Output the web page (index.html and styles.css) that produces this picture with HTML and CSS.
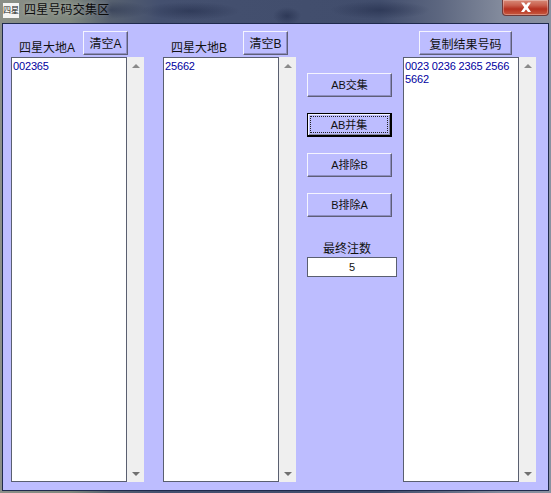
FILE: index.html
```html
<!DOCTYPE html>
<html lang="zh">
<head>
<meta charset="utf-8">
<title>四星号码交集区</title>
<link rel="stylesheet" href="styles.css">
</head>
<body>
<div class="window">
  <div class="titlebar">
    <div class="app-icon">四星</div>
    <div class="title">四星号码交集区</div>
    <div class="close"><svg width="14" height="11" viewBox="0 0 14 11"><path d="M2 0.5h3l2 2.6 2-2.6h3L8.800 5.200 12 10H9L7 7.400 5 10H2l3.200-4.800z" fill="#fff"/></svg></div>
  </div>
  <div class="client">
    <section class="col">
      <div class="col-head">
        <span class="col-label">四星大地A</span>
        <button class="btn btn-clear">清空A</button>
      </div>
      <div class="listbox">
        <div class="list">002365</div>
        <div class="scroll"><i class="arrow-up"></i><i class="arrow-down"></i></div>
      </div>
    </section>
    <section class="col col-b">
      <div class="col-head col-head-b">
        <span class="col-label">四星大地B</span>
        <button class="btn btn-clear">清空B</button>
      </div>
      <div class="listbox">
        <div class="list">25662</div>
        <div class="scroll"><i class="arrow-up"></i><i class="arrow-down"></i></div>
      </div>
    </section>
    <section class="actions">
      <button class="btn btn-action">AB交集</button>
      <button class="btn btn-action is-focused"><span class="focus-ring">AB并集</span></button>
      <button class="btn btn-action">A排除B</button>
      <button class="btn btn-action">B排除A</button>
      <div class="count-label">最终注数</div>
      <div class="count">5</div>
    </section>
    <section class="col col-c">
      <div class="col-head col-head-c">
        <button class="btn btn-copy">复制结果号码</button>
      </div>
      <div class="listbox">
        <div class="list">0023 0236 2365 2566 5662</div>
        <div class="scroll"><i class="arrow-up"></i><i class="arrow-down"></i></div>
      </div>
    </section>
  </div>
</div>
</body>
</html>
```
FILE: styles.css
```css
* { box-sizing: border-box; }
html, body { margin: 0; height: 100%; overflow: hidden; }
body {
  font-family: "Liberation Sans", "Noto Sans CJK SC", sans-serif;
  font-size: 12px;
  color: #111;
}
.window {
  width: 551px;
  height: 493px;
  display: flex;
  flex-direction: column;
  padding: 0 2px 2px;
  background:
    radial-gradient(ellipse 40px 9px at 110px 10px, rgba(30,40,70,.45), transparent),
    radial-gradient(ellipse 50px 9px at 190px 11px, rgba(30,40,70,.5), transparent),
    radial-gradient(ellipse 14px 9px at 287px 16px, rgba(30,40,70,.55), transparent),
    radial-gradient(ellipse 50px 9px at 380px 10px, rgba(30,40,70,.5), transparent),
    linear-gradient(90deg, #8b8f88 0, #7f887e 70px, #56606f 110px, #44506f 160px, #414d6c 380px, #5d6780 440px, #828a9c 500px, #8a91a0 551px);
}
.titlebar {
  height: 23px;
  flex: none;
  display: flex;
  align-items: flex-start;
  margin: 0 -2px;
  position: relative;
}
.app-icon {
  width: 16px;
  height: 15px;
  margin: 3px 0 0 3px;
  background: #f4f4f4;
  font-size: 8px;
  line-height: 15px;
  text-align: center;
  white-space: nowrap;
  color: #222;
}
.title {
  margin: 2px 0 0 5px;
  line-height: 17px;
  font-size: 12px;
  letter-spacing: .2px;
  color: #0c0c0c;
  text-shadow: 0 0 4px rgba(255,255,255,.45);
}
.close {
  position: absolute;
  left: 502px;
  top: 0;
  width: 47px;
  height: 16px;
  border: 1px solid #6e3a3a;
  border-top: 0;
  border-radius: 0 0 4px 4px;
  background: linear-gradient(#d88a78 0, #c9604e 35%, #b5301f 60%, #c85a40 100%);
  box-shadow: inset 0 0 0 1px rgba(255,255,255,.3);
  display: flex;
  align-items: center;
  justify-content: center;
}
.client {
  flex: 1;
  display: flex;
  align-items: stretch;
  padding: 7px 0 8px 8px;
  background: #bdbdff;
  border: 1px solid #1f2a4d;
}
.col {
  width: 133px;
  display: flex;
  flex-direction: column;
}
.col-b { margin-left: 19px; }
.col-c { margin-left: 6px; }
.col-head {
  height: 26px;
  flex: none;
  display: flex;
  align-items: flex-start;
  justify-content: space-between;
  padding: 0 16px 0 8px;
}
.col-head-b { padding-right: 8px; }
.col-head-c { padding-left: 16px; padding-right: 24px; }
.col-label {
  margin-top: 9px;
  line-height: 17px;
  white-space: nowrap;
}
.btn {
  display: block;
  padding: 0;
  margin: 0;
  font: inherit;
  color: #111;
  background: #bdbdff;
  border: 1px solid;
  border-color: #f4f4ff #5f5f78 #5f5f78 #f4f4ff;
  box-shadow: inset -1px -1px 0 #8e8ec0;
  white-space: nowrap;
  text-align: center;
}
.btn-clear { width: 45px; height: 24px; padding-bottom: 1px; }
.btn-copy { width: 93px; height: 24px; }
.btn-action { width: 85px; height: 24px; font-size: 11px; padding-bottom: 2px; }
.is-focused {
  border: 1px solid #000;
  border-width: 1px 2px 2px 1px;
  box-shadow: inset 1px 1px 0 #f4f4ff, inset -1px -1px 0 #8a8aa0;
  padding: 2px;
}
.focus-ring {
  display: block;
  height: 100%;
  line-height: 17px;
  border: 1px dotted #222;
}
.listbox {
  flex: 1;
  display: flex;
  min-height: 0;
}
.list {
  width: 116px;
  padding: 2px 1px;
  background: #fff;
  border: 1px solid #5a5f70;
  color: #0000a0;
  font-size: 11px;
  letter-spacing: -.15px;
  line-height: 13px;
}
.scroll {
  width: 17px;
  padding: 7px 0 6px;
  background: #efefef;
  display: flex;
  flex-direction: column;
  justify-content: space-between;
  align-items: center;
}
.arrow-up {
  width: 0;
  height: 0;
  border: 4px solid transparent;
  border-top: 0;
  border-bottom: 4px solid #8a8a8a;
}
.arrow-down {
  width: 0;
  height: 0;
  border: 4px solid transparent;
  border-bottom: 0;
  border-top: 4px solid #707070;
}
.actions {
  width: 90px;
  margin-left: 11px;
  padding-top: 42px;
  display: flex;
  flex-direction: column;
  gap: 16px;
}
.count-label {
  margin-top: 8px;
  padding-left: 16px;
  line-height: 17px;
  white-space: nowrap;
}
.count {
  margin-top: -17px;
  height: 20px;
  line-height: 18px;
  text-align: center;
  background: #fff;
  border: 1px solid #5a5f70;
  font-size: 11px;
}
```
